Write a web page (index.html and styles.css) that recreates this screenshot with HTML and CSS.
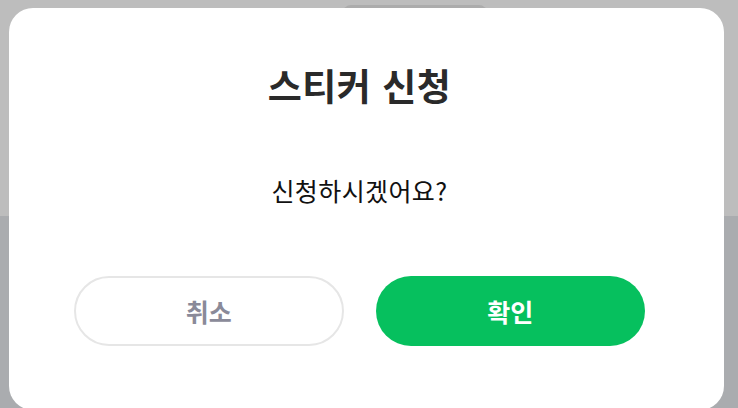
FILE: index.html
```html
<!DOCTYPE html>
<html lang="ko">
<head>
<meta charset="utf-8">
<link rel="stylesheet" href="styles.css">
</head>
<body>
<div class="backdrop">
  <div class="bg-top"><div class="bg-tab"></div></div>
  <div class="bg-bottom"></div>
</div>
<div class="modal">
  <h2 class="modal-title">스티커 신청</h2>
  <p class="modal-message">신청하시겠어요?</p>
  <div class="modal-actions">
    <button class="btn btn-cancel">취소</button>
    <button class="btn btn-confirm">확인</button>
  </div>
</div>
</body>
</html>
```
FILE: styles.css
```css
html, body {
  margin: 0;
  padding: 0;
  width: 738px;
  height: 408px;
  overflow: hidden;
  font-family: "Noto Sans CJK KR", "Noto Sans", sans-serif;
}
.backdrop {
  display: flex;
  flex-direction: column;
  height: 408px;
}
.bg-top {
  height: 216px;
  background: #bdbdbd;
  display: flex;
}
.bg-tab {
  width: 144px;
  height: 20px;
  margin-top: 5px;
  margin-left: 343px;
  background: #acacac;
  border-radius: 8px;
}
.bg-bottom {
  flex: 1;
  background: #aaacaf;
}
.modal {
  position: absolute;
  left: 9px;
  top: 8px;
  width: 715px;
  height: 402px;
  box-sizing: border-box;
  background: #fff;
  border-radius: 24px;
  padding: 0 79px 0 65px;
  display: flex;
  flex-direction: column;
  align-items: center;
}
.modal-title {
  margin: 53px 0 0;
  font-size: 37px;
  font-weight: 700;
  line-height: 48px;
  color: #2a2a2a;
  letter-spacing: 0.5px;
}
.modal-message {
  margin: 65px 0 0;
  font-size: 25px;
  font-weight: 400;
  line-height: 32px;
  color: #111;
  letter-spacing: 0.4px;
}
.modal-actions {
  margin-top: 70px;
  width: 100%;
  display: grid;
  grid-template-columns: 1fr 1fr;
  gap: 32px;
}
.btn {
  height: 70px;
  border-radius: 35px;
  font-family: inherit;
  font-size: 25px;
  font-weight: 700;
  cursor: pointer;
}
.btn-cancel {
  background: #fff;
  border: 2px solid #e6e6e6;
  color: #8a8a99;
}
.btn-confirm {
  background: #06c05e;
  border: none;
  color: #fff;
}
```
